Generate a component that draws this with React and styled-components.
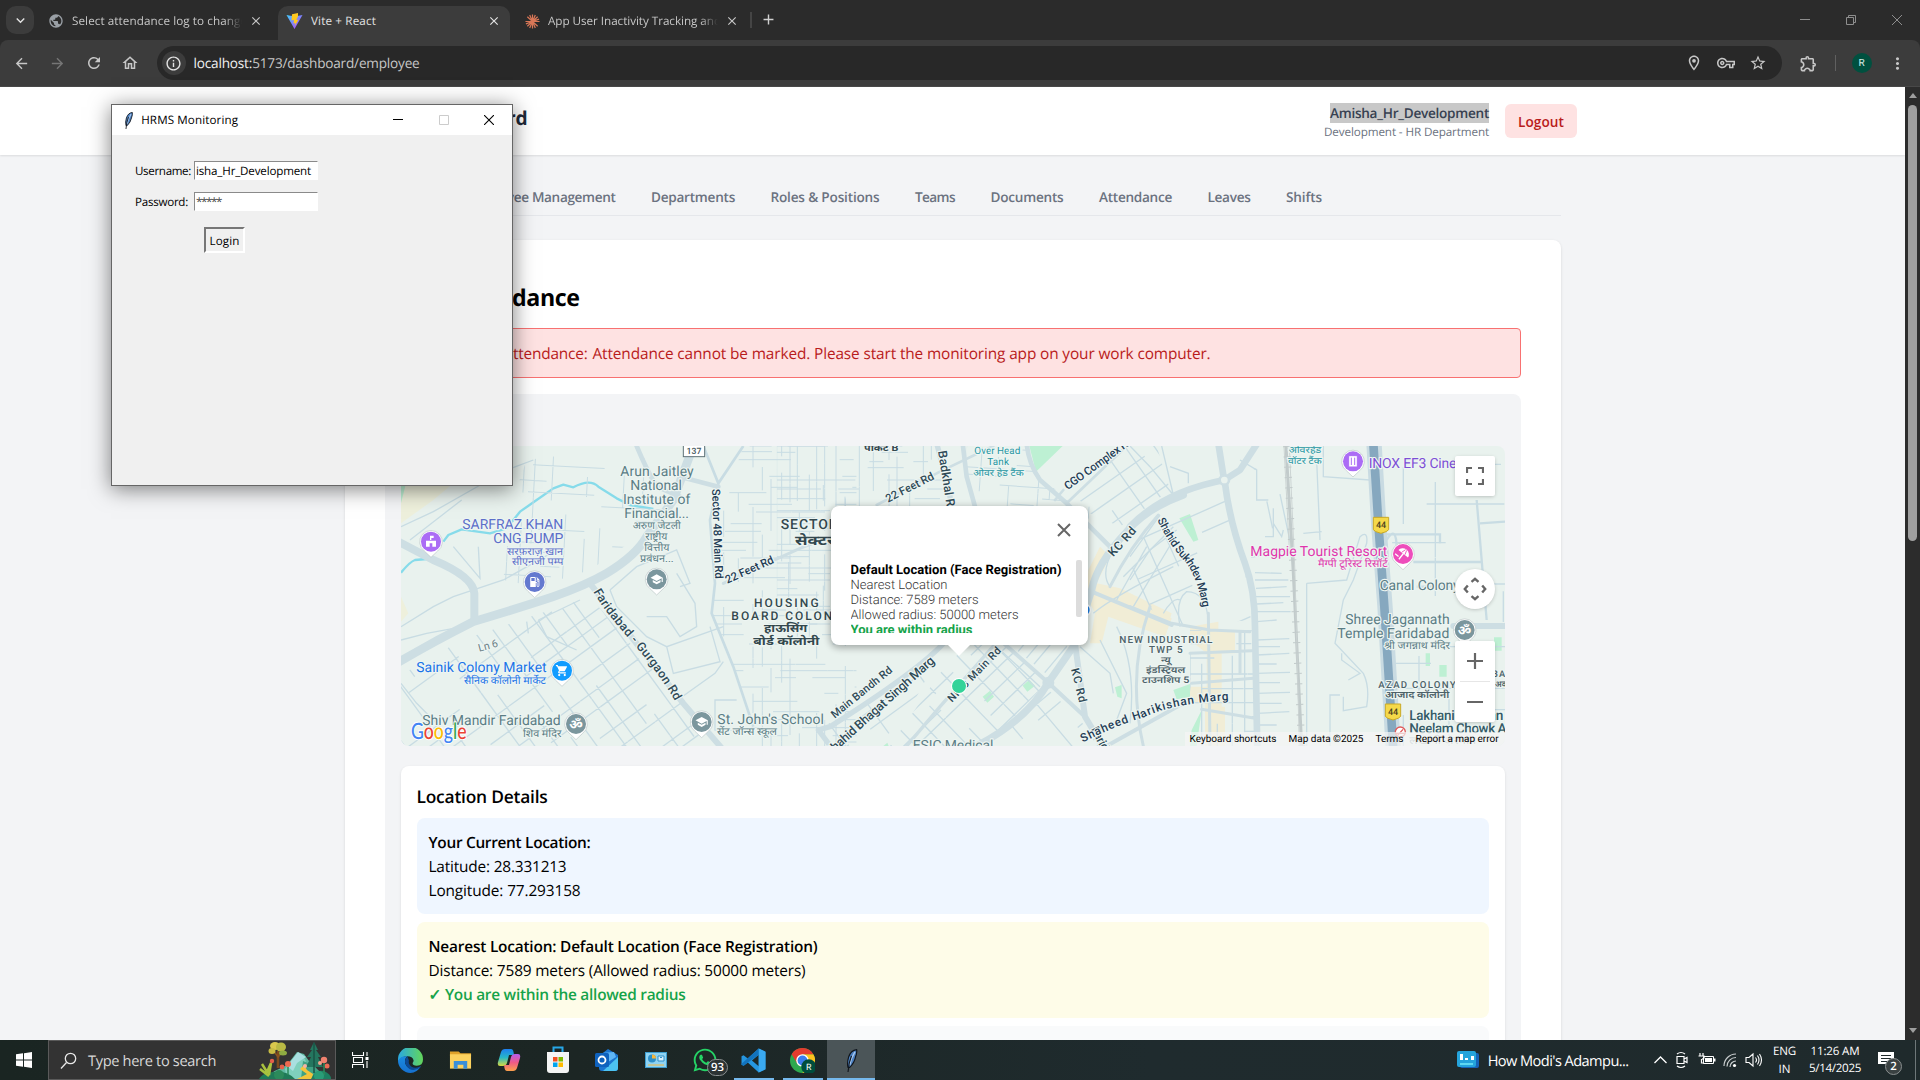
import React, { useLayoutEffect, useRef } from "react";
import styled, { createGlobalStyle, css } from "styled-components";
import {
  MdArrowBack, MdArrowForward, MdRefresh, MdOutlineHome, MdOutlineInfo, MdOutlineLocationOn,
  MdOutlineVpnKey, MdStarBorder, MdOutlineExtension, MdMoreVert, MdAdd, MdClose, MdExpandMore,
  MdPublic, MdLocalGasStation, MdSchool, MdShoppingCart,
} from "react-icons/md";
import { FaWhatsapp } from "react-icons/fa";

const UI = `"Open Sans", "Noto Sans", sans-serif`;

const Global = createGlobalStyle`
  * { box-sizing: border-box; }
  body { margin: 0; background: #f3f4f6; font-family: ${UI}; overflow: hidden; text-rendering: geometricPrecision; }
  p, h1, h2, h3 { margin: 0; }
  svg { display: block; flex: none; }
`;

/* ---------- text that is spaced to fill a given measure ---------- */
const FitSpan = styled.span`
  display: inline-block;
  white-space: pre;
  width: ${(p) => p.$w}px;
  padding-top: ${(p) => p.$drop}px;
`;
function Fit({ w, drop = 0, children }) {
  const ref = useRef(null);
  useLayoutEffect(() => {
    const range = document.createRange();
    range.selectNodeContents(ref.current);
    ref.current.style.letterSpacing = "0px";
    const natural = range.getBoundingClientRect().width;
    const n = ref.current.textContent.length;
    ref.current.style.letterSpacing = `${(w - natural) / n}px`;
  }, [w]);
  return <FitSpan ref={ref} $w={w} $drop={drop}>{children}</FitSpan>;
}

/* ---------- desktop ---------- */
const Desktop = styled.div`
  position: relative;
  width: 1920px;
  height: 1080px;
  display: flex;
  flex-direction: column;
  overflow: hidden;
`;

/* ---------- browser chrome ---------- */
const TabStrip = styled.div`
  height: 40px;
  flex: none;
  display: flex;
  align-items: flex-end;
  background: #2b2b2b;
  color: #c7c7c7;
`;
const TabSearch = styled.div`
  width: 28px;
  height: 28px;
  margin: 0 6px 6px 6px;
  border-radius: 10px;
  background: #3c3c3c;
  display: grid;
  place-items: center;
  color: #e3e3e3;
`;
const Tab = styled.div`
  width: ${(p) => p.$w}px;
  height: 34px;
  padding: 0 ${(p) => p.$pr || 9}px 4px ${(p) => p.$pl || 8}px;
  display: flex;
  align-items: center;
  font-size: 11.7px;
  border-radius: 10px 10px 0 0;
  color: ${(p) => (p.$active ? "#e3e3e3" : "#c7c7c7")};
  background: ${(p) => (p.$active ? "#3c3c3c" : "transparent")};
`;
const TabTitle = styled.div`
  flex: 1;
  margin-left: 8px;
  overflow: hidden;
  white-space: nowrap;
  ${(p) => p.$fade && css`mask-image: linear-gradient(90deg, #000 86%, transparent 96%);`}
`;
const TabDivider = styled.div`
  width: 2px;
  height: 16px;
  margin: 0 8px 12px 4px;
  background: #454545;
`;
const NewTab = styled.div`margin-bottom: 12px; color: #d0d0d0;`;
const WindowButtons = styled.div`
  margin-left: auto;
  width: 138px;
  height: 40px;
  display: grid;
  grid-template-columns: repeat(3, 46px);
  place-items: center;
`;
const Toolbar = styled.div`
  height: 47px;
  flex: none;
  display: flex;
  align-items: center;
  padding-left: 3px;
  background: #3c3c3c;
  border-bottom: 1px solid #484848;
  border-radius: 8px 8px 0 0;
  color: #c7c7c7;
`;
const ToolbarWrap = styled.div`background: #2b2b2b; flex: none;`;
const NavButton = styled.div`
  width: 36.4px;
  display: grid;
  place-items: center;
  color: ${(p) => (p.$dim ? "#767676" : "#c7c7c7")};
`;
const Omnibox = styled.div`
  margin-left: 8px;
  width: 1625px;
  height: 34px;
  padding: 0 15px 0 5px;
  border-radius: 17px;
  background: #282828;
  display: flex;
  align-items: center;
  font-size: 13.6px;
`;
const InfoDot = styled.div`
  width: 24px;
  height: 24px;
  border-radius: 50%;
  background: #3c3c3c;
  display: grid;
  place-items: center;
  margin-right: 8px;
  color: #e3e3e3;
`;
const Address = styled.div`margin-bottom: 1px;`;
const Host = styled.span`color: #f1f1f1;`;
const OmniIcons = styled.div`
  margin-left: auto;
  display: flex;
  align-items: center;
  gap: 14px;
`;
const ToolRight = styled.div`
  flex: 1;
  padding-left: 17px;
  display: flex;
  align-items: center;
`;
const VRule = styled.div`width: 1px; height: 16px; margin: 0 16px 0 17px; background: #606060;`;
const Avatar = styled.div`
  width: 20px;
  height: 20px;
  margin-right: 16px;
  border-radius: 50%;
  background: #00503f;
  color: #d9efe8;
  display: grid;
  place-items: center;
  font: 10px Roboto, sans-serif;
`;

/* ---------- page ---------- */
const Viewport = styled.div`
  height: 953px;
  flex: none;
  display: flex;
  overflow: hidden;
`;
const Page = styled.main`
  width: 1905px;
  height: 953px;
  overflow: hidden;
  background: #f3f4f6;
`;
const ScrollTrack = styled.div`
  width: 15px;
  background: #2c2c2c;
  display: flex;
  flex-direction: column;
  align-items: center;
`;
const ScrollThumb = styled.div`
  width: 9px;
  height: 436px;
  margin-bottom: auto;
  border-radius: 5px;
  background: #9f9f9f;
`;
const ScrollArrow = styled.div`
  width: 0;
  height: 0;
  border: 4.5px solid transparent;
  ${(p) => (p.$down
    ? css`border-top: 5px solid #9f9f9f; border-bottom: 0; margin-bottom: 7px;`
    : css`border-bottom: 5px solid #9f9f9f; border-top: 0; margin: 6px 0 7px;`)}
`;
const AppHeader = styled.header`
  height: 68px;
  padding: 0 328px 0 328.5px;
  display: flex;
  justify-content: space-between;
  background: #fff;
  box-shadow: 0 1px 2px rgba(0, 0, 0, 0.1);
`;
const AppTitle = styled.h1`
  font-size: 19.2px;
  line-height: 28px;
  padding-top: 17px;
  font-weight: 700;
  color: #1f2937;
`;
const Account = styled.div`display: flex; align-items: flex-start; gap: 16px; padding-top: 16px;`;
const AccountText = styled.div`text-align: right;`;
const UserName = styled.div`
  font-size: 13.6px;
  font-weight: 600;
  line-height: 20px;
  height: 20px;
  width: 159px;
  margin-left: auto;
  color: #374151;
  background: #c8c8c8;
`;
const UserRole = styled.div`font-size: 11.7px; line-height: 16px; padding-top: 1px; color: #6b7280;`;
const Logout = styled.button`
  width: 72px;
  height: 34px;
  margin-top: 1px;
  padding: 0;
  border: 0;
  border-radius: 6px;
  background: #fee2e2;
  color: #b91c1c;
  font: 600 13.6px ${UI};
`;
const Body = styled.div`padding: 24px 344.5px 0;`;
const Nav = styled.nav`
  height: 37px;
  padding: 7px 0 0 123px;
  display: flex;
  gap: 35.5px;
  align-items: flex-start;
  border-bottom: 1px solid #e5e7eb;
  font-size: 13.6px;
  font-weight: 600;
  line-height: 20px;
  color: #6b7280;
`;
const Card = styled.section`
  margin-top: 24px;
  height: 860px;
  padding: 40px;
  background: #fff;
  border-radius: 8px;
  box-shadow: 0 1px 3px rgba(0, 0, 0, 0.12);
`;
const CardTitle = styled.h2`
  height: 32px;
  font-size: 23.2px;
  line-height: 32px;
  font-weight: 700;
  color: #000;
`;
const Alert = styled.div`
  height: 50px;
  margin-top: 16px;
  padding: 0 16px;
  display: flex;
  align-items: center;
  gap: 5px;
  border: 1px solid #f87171;
  border-radius: 4px;
  background: #fee2e2;
  color: #b91c1c;
  font-size: 15.4px;
`;
const Panel = styled.div`
  margin-top: 16px;
  height: 700px;
  padding: 16px;
  border-radius: 8px;
  background: #f3f4f6;
`;
const PanelTitle = styled.h3`
  height: 28px;
  font-size: 17px;
  line-height: 28px;
  font-weight: 600;
  margin-bottom: 8px;
`;
const Details = styled.div`
  margin-top: 20px;
  height: 400px;
  padding: 16px;
  border-radius: 8px;
  background: #fff;
  box-shadow: 0 1px 3px rgba(0, 0, 0, 0.1);
`;
const DetailsTitle = styled.h3`
  height: 28px;
  font-size: 17.4px;
  line-height: 28px;
  font-weight: 600;
  margin-bottom: 8px;
`;
const InfoBox = styled.div`
  height: 96px;
  margin-bottom: 8px;
  padding: 12px;
  border-radius: 8px;
  background: ${(p) => p.$bg};
  font-size: 15.4px;
  line-height: 24px;
`;
const Strong = styled.p`font-weight: 600; height: 24px; color: ${(p) => p.$color || "#000"};`;
const Line = styled.p`height: 24px;`;

/* ---------- map ---------- */
const MapBox = styled.div`
  position: relative;
  width: 1104px;
  height: 300px;
  border-radius: 8px;
  overflow: hidden;
  background: #e9f2ee;
  font-family: Roboto, sans-serif;
`;
const Bubble = styled.div`
  position: absolute;
  left: 430px;
  top: 60px;
  width: 257px;
  height: 139px;
  border-radius: 8px;
  background: #fff;
  box-shadow: 0 2px 7px 1px rgba(0, 0, 0, 0.3);
`;
const BubbleTip = styled.svg`position: absolute; left: 116px; top: 138px;`;
const BubbleClose = styled.svg`position: absolute; right: 17px; top: 17px;`;
const BubbleText = styled.div`
  position: absolute;
  left: 20px;
  top: 57px;
  width: 215px;
  height: 70px;
  overflow: hidden;
  font-size: 13px;
  line-height: 15px;
  font-weight: 300;
  color: #333;
`;
const BubbleLine = styled.p`
  height: 15px;
  font-weight: ${(p) => (p.$bold ? 700 : 300)};
  color: ${(p) => p.$color || "#333"};
`;
const BubbleScroll = styled.div`
  position: absolute;
  right: 6px;
  top: 54px;
  width: 6px;
  height: 57px;
  border-radius: 2px;
  background: #dcdcdc;
`;
const MapControl = styled.div`
  position: absolute;
  right: 10px;
  top: ${(p) => p.$top}px;
  width: 40px;
  height: ${(p) => p.$h || 40}px;
  border-radius: ${(p) => (p.$round ? "50%" : "2px")};
  background: #fff;
  box-shadow: 0 1px 4px -1px rgba(0, 0, 0, 0.3);
  display: grid;
  place-items: center;
  ${(p) => p.$split && css`grid-template-rows: 40px 1px 40px;`}
`;
const ControlRule = styled.div`width: 30px; height: 1px; background: #e6e6e6;`;
const Attribution = styled.div`
  position: absolute;
  right: 0;
  bottom: 0;
  width: 320px;
  height: 14px;
  padding-left: 5px;
  display: flex;
  align-items: center;
  gap: 12px;
  background: rgba(245, 245, 245, 0.7);
  font-size: 10px;
  color: #000;
`;

function rng(seed) {
  let s = seed;
  return () => {
    s = (s * 16807) % 2147483647;
    return s / 2147483647;
  };
}
function streets(seed, w, h, u, v, keep = 0.65) {
  const r = rng(seed);
  let d = "";
  for (let y = 0; y < h; y += u * (0.6 + r() * 0.8)) {
    for (let x = 0; x < w;) {
      const len = v * (1 + r() * 3);
      if (r() < keep) d += `M${x | 0} ${y | 0}h${len | 0}`;
      x += len;
    }
  }
  for (let x = 0; x < w; x += v * (0.6 + r() * 0.8)) {
    for (let y = 0; y < h;) {
      const len = u * (1 + r() * 3);
      if (r() < keep) d += `M${x | 0} ${y | 0}v${len | 0}`;
      y += len;
    }
  }
  return d;
}
const MINOR = { fill: "none", stroke: "#c8dce3", strokeWidth: 4 };
const MAJOR = { fill: "none", stroke: "#cddee3", strokeLinecap: "round", strokeLinejoin: "round" };

function Streets({ id, clip, at, angle = 0, seed, w, h, u, v, keep, sw = 4 }) {
  return (
    <>
      <clipPath id={id}><polygon points={clip} /></clipPath>
      <g clipPath={`url(#${id})`}>
        <path transform={`translate(${at}) rotate(${angle})`} d={streets(seed, w, h, u, v, keep)} {...MINOR} strokeWidth={sw} />
      </g>
    </>
  );
}

const MapText = styled.text`
  font-family: Roboto, "Noto Sans Devanagari", "Noto Sans", sans-serif;
  font-size: ${(p) => p.$s}px;
  font-weight: ${(p) => p.$wt || 400};
  fill: ${(p) => p.$c || "#5b7d85"};
  paint-order: stroke;
  stroke: ${(p) => (p.$bare ? "none" : "#edf5f2")};
  stroke-width: 7px;
  stroke-linejoin: round;
`;
function L({ x, y, w, s = 42, c, wt, a = "start", rot, children }) {
  /* Devanagari clusters keep their joins only when the glyphs are scaled, not spaced */
  const indic = /[\u0900-\u097f]/.test(children);
  return (
    <MapText
      x={x} y={y} $s={s} $c={c} $wt={wt} textAnchor={a} textLength={w}
      lengthAdjust={indic ? "spacingAndGlyphs" : "spacing"}
      transform={rot ? `rotate(${rot} ${x} ${y})` : undefined}
    >
      {children}
    </MapText>
  );
}
function Along({ id, d, w, s = 34, c = "#2f4a57", children }) {
  return (
    <>
      <path id={id} d={d} fill="none" />
      <MapText $s={s} $c={c} $wt={500}><textPath href={`#${id}`} textLength={w}>{children}</textPath></MapText>
    </>
  );
}
function Pin({ x, y, c, icon: Icon, children }) {
  return (
    <g transform={`translate(${x} ${y})`}>
      <path d="M0 47L-20 28A34 34 0 1 1 20 28Z" fill="#fff" stroke="#b9c6c6" strokeWidth="2" />
      <circle r="30" fill={c} />
      {Icon && <Icon x={-20} y={-20} size={40} color="#fff" />}
      {children}
    </g>
  );
}
const Om = () => <MapText x={0} y={15} $s={40} $c="#fff" $wt={700} $bare textAnchor="middle">ॐ</MapText>;
function Shield({ x, y }) {
  return (
    <g transform={`translate(${x} ${y})`}>
      <path d="M-23 -23H23V14Q20 20 0 25Q-20 20 -23 14Z" fill="#f5d949" stroke="#c9a927" strokeWidth="3" />
      <text y="9" textAnchor="middle" fontSize="27" fontWeight="500" fill="#4a4220">44</text>
    </g>
  );
}

const WEST = "translate(-11 -6) scale(.33333)";
const MID = "translate(379 -6) scale(.33333)";
const EAST = "translate(729 -6) scale(.33333)";

function MapDrawing() {
  return (
    <svg width="1104" height="300" viewBox="0 0 1104 300">
      {/* ground */}
      <g transform={WEST}>
        <path d="M33 250L130 180L190 130H33Z" fill="#eef0dc" />
        <path d="M33 470L55 520L33 545Z" fill="#eef0dc" />
        <path d="M33 130H48L33 190Z" fill="#bdf0d3" />
        <path d="M33 398Q60 365 75 360L110 357M160 305L175 285L215 268L300 280L350 265L390 215L440 180L490 145L520 134L550 142Q600 115 625 140L680 175L720 195L790 207" fill="none" stroke="#86dbea" strokeWidth="7" strokeLinejoin="round" />
      </g>
      <g transform={MID}>
        <path d="M748 18H848L768 95Z" fill="#bdf0d3" />
        <path d="M608 770L630 752L642 770L622 788ZM728 737L748 719L765 737L742 755ZM1005 742L1025 735V775L1012 770ZM310 918L322 908L326 918Z" fill="#bdf0d3" />
        <path d="M960 320L990 350L950 430L1020 445L1175 520L1155 590L985 530L965 610H930L945 520L920 470L925 390Z" fill="#f1edd6" />
      </g>
      <g transform={EAST}>
        <path d="M0 478L125 535L105 590L0 545ZM180 560L265 545V575H315V640H275V800H285V918H225V790H180V740H230V640L180 600Z" fill="#f1edd6" />
        <path d="M148 235L180 222L205 300L190 305ZM130 750L180 732V770L140 778ZM185 870L215 810L200 918H180ZM887 640H900V678H887ZM928 675H950V710H928ZM1092 592H1115V632H1092Z" fill="#bdf0d3" />
      </g>

      {/* street grids */}
      <g transform={WEST}>
        <Streets id="c1" clip="33,705 215,600 600,470 985,918 33,918" at="-150 760" angle={-36} seed={17} w={1100} h={900} u={58} v={52} keep={0.7} />
        <Streets id="c2" clip="985,240 1060,18 1400,18 1400,918 1100,918 1030,680 965,520" at="960 18" seed={23} w={440} h={900} u={26} v={38} keep={0.5} sw={3} />
        <Streets id="c3" clip="410,60 740,18 840,180 760,280 600,390 440,440 340,420 360,200" at="330 18" angle={3} seed={41} w={520} h={420} u={40} v={52} keep={0.38} sw={3} />
        <path {...MINOR} d="M33 560L130 500L190 470L340 420L500 330M33 600L110 580L220 560M215 180L150 230L60 300M33 260L130 215L350 90L430 60M190 320L270 415L265 320M410 545L415 580M445 540L570 480M445 540L470 590L560 630M660 450L740 380L860 330L900 430L870 440M660 450L680 500L770 590L830 620L1000 560M830 620L850 700L990 665L960 560M870 775L975 700L1000 665M770 530H830L870 590L920 560L915 490L860 400M1040 780H975V870H1050M33 730L80 790L150 860" />
        <path {...MINOR} d="M985 130L960 240L975 430L965 520L1030 680L1090 860M940 18L985 130L1060 18" strokeWidth="8" />
      </g>
      <g transform={MID}>
        <Streets id="c4" clip="-10,18 480,18 510,200 150,200 150,600 -10,600" at="-10 18" seed={57} w={540} h={600} u={30} v={36} keep={0.5} sw={3} />
        <Streets id="c5" clip="330,918 480,700 560,615 680,615 800,728 620,918" at="220 800" angle={-44} seed={71} w={700} h={500} u={42} v={50} keep={0.8} />
        <Streets id="c6" clip="180,918 130,860 300,760 480,640 330,918" at="60 860" angle={-36} seed={12} w={560} h={300} u={62} v={60} keep={0.5} />
        <Streets id="c7" clip="560,18 740,18 760,90 930,240 930,200 560,200" at="560 18" angle={4} seed={87} w={400} h={230} u={22} v={40} keep={0.35} sw={3} />
        <Streets id="c8" clip="860,130 1040,18 1130,18 1170,150 1020,260 930,220" at="820 170" angle={-35} seed={19} w={420} h={260} u={44} v={90} keep={0.5} />
        <Streets id="c9" clip="690,615 870,615 810,710" at="660 640" angle={-50} seed={99} w={300} h={300} u={34} v={50} keep={0.6} />
        <Streets id="c10" clip="690,860 800,745 900,840 960,918 640,918" at="560 850" angle={-40} seed={5} w={500} h={400} u={60} v={74} keep={0.7} />
        <path {...MINOR} d="M650 620L780 740M1000 330Q960 400 990 440M940 520Q1000 470 1180 380M1010 480L1100 320M1060 500L1180 300M1030 410L1180 260M1150 520Q1180 470 1200 480M960 600L1040 760L1010 840L940 900M1010 560Q1070 680 1050 850M900 620L990 700L1000 760" />
      </g>
      <g transform={EAST}>
        <Streets id="c11" clip="90,230 280,140 340,370 370,540 240,550 150,560 0,470 0,330" at="-20 320" angle={-24} seed={33} w={500} h={480} u={62} v={66} keep={0.5} />
        <Streets id="c12" clip="180,570 375,570 380,918 215,918 180,740" at="180 570" seed={61} w={200} h={350} u={44} v={34} keep={0.62} />
        <Streets id="c13" clip="310,130 480,18 480,360 345,360" at="310 100" angle={-12} seed={77} w={260} h={260} u={60} v={70} keep={0.25} />
        <Streets id="c14" clip="780,18 1125,18 1125,918 800,918" at="780 18" seed={29} w={345} h={900} u={62} v={60} keep={0.22} />
        <path {...MINOR} d="M375 398L455 400M375 420H475M378 445L470 440M378 470H480M380 492L460 488M380 515H482M380 545L440 540M380 600L478 596M380 620H450M380 645L478 640M380 672H440M382 700L480 697M382 728H450M382 760L480 757M382 790H455M382 820L478 815M382 855H440M150 560Q135 480 170 455Q230 455 235 545M560 60L570 300M580 18V110L720 120M520 280L575 275M530 430V918M530 430L650 420L690 290Q715 270 710 310L670 420L640 480L615 610L700 700Q720 740 710 800L640 812V770M635 640V660L690 700L655 720M600 918V765H630M120 80L175 100V130M330 60L380 90V180H415M405 290H430V205M430 250L455 290L460 270M0 350L90 225M0 420L60 330L140 270M0 18L60 80L130 165M95 18L130 165" />
        <path {...MINOR} d="M850 366H1055M1040 180L1070 540M760 283H930V310M860 440H1050M1050 250L1125 245M770 300Q800 250 800 330" strokeWidth="7" />
        <path {...MAJOR} d="M970 558H1125" strokeWidth="18" />
        <path d="M468 18L490 400L515 918" fill="none" stroke="#c2cbcb" strokeWidth="9" />
        <path d="M478 18L495 400L508 918M462 18L478 330" fill="none" stroke="#ccd4d3" strokeWidth="3" />
        <path d="M470 18L490 400L515 918" fill="none" stroke="#c2cbcb" strokeWidth="22" strokeDasharray="3 28" />
      </g>

      {/* main roads */}
      <g transform={WEST} {...MAJOR}>
        <path d="M20 670Q130 605 250 545Q400 500 490 470Q590 435 650 400Q740 345 770 290L850 180L910 18" strokeWidth="26" />
        <path d="M20 302L130 360Q250 410 253 460V540" strokeWidth="24" />
        <path d="M600 430L700 560L880 790L1000 930" strokeWidth="18" />
        <path d="M740 18Q770 90 800 140L870 170M870 110L985 140" strokeWidth="14" />
        <path d="M1000 430L1230 325M1230 325L1400 260" strokeWidth="9" />
      </g>
      <g transform={MID} {...MAJOR}>
        <path d="M470 10L500 120L520 220" strokeWidth="16" />
        <path d="M548 10L560 110L585 200M740 10Q745 70 780 120L860 190L995 325" strokeWidth="14" />
        <path d="M290 195L480 95L640 18M860 190L1040 18M825 180L850 150" strokeWidth="8" />
        <path d="M1210 165Q1100 205 1040 275Q950 370 935 450L880 620L805 728Q740 840 590 918" strokeWidth="22" />
        <path d="M885 610L900 720L915 830L975 930" strokeWidth="18" />
        <path d="M660 600L805 728L915 830" strokeWidth="12" />
        <path d="M500 600Q420 690 150 860L115 870L160 930" strokeWidth="16" />
        <path d="M640 618L480 800L380 918" strokeWidth="10" />
        <path d="M935 455L1175 555M980 918L1210 790" strokeWidth="12" />
        <circle cx="805" cy="728" r="14" strokeWidth="8" />
      </g>
      <g transform={EAST} {...MAJOR}>
        <path d="M0 260Q100 155 283 120L330 90L382 10M265 10L280 105M285 130Q300 250 345 370Q375 450 375 560L382 930" strokeWidth="20" />
        <circle cx="283" cy="120" r="14" fill="#e9f2ee" strokeWidth="8" />
        <path d="M0 500L125 550L240 570L360 575M85 225Q0 320 -60 440M235 520L240 918M330 575V700M180 640L365 632M185 730L370 715M40 918Q-10 700 60 500M215 808L375 835" strokeWidth="9" />
        <path d="M732 10L746 250L765 500L790 930" stroke="#c9dbe2" strokeWidth="46" />
        <path d="M730 10L745 250L763 500L790 930" stroke="#86a8bf" strokeWidth="26" />
      </g>

      {/* labels, west */}
      <g transform={WEST}>
        <rect x="880" y="14" width="64" height="36" fill="#fff" stroke="#5f7278" strokeWidth="3" />
        <text x="912" y="43" textAnchor="middle" fontSize="26" fontWeight="500" fill="#44565c">137</text>
        <L x={691} y={109} w={220}>Arun Jaitley</L>
        <L x={721} y={151} w={155}>National</L>
        <L x={699} y={193} w={202}>Institute of</L>
        <L x={703} y={235} w={194}>Financial...</L>
        <L x={728} y={268} w={144} s={31}>अरुण जेटली</L>
        <L x={766} y={301} w={66} s={31}>राष्ट्रीय</L>
        <L x={763} y={333} w={75} s={31}>वित्तीय</L>
        <L x={750} y={366} w={101} s={31}>प्रबंधन...</L>
        <L x={217} y={267} w={303} c="#5c6fc9">SARFRAZ KHAN</L>
        <L x={310} y={310} w={210} c="#5c6fc9">CNG PUMP</L>
        <L x={351} y={344} w={168} s={31} c="#5c6fc9">सरफ़राज़ खान</L>
        <L x={366} y={376} w={154} s={31} c="#5c6fc9">सीएनजी पम्प</L>
        <L x={79} y={696} w={391} c="#1a73e8">Sainik Colony Market</L>
        <L x={222} y={731} w={246} s={31} c="#1a73e8">सैनिक कॉलोनी मार्केट</L>
        <L x={97} y={855} w={415}>Shiv Mandir Faridabad</L>
        <L x={399} y={890} w={115} s={31}>शिव मंदिर</L>
        <L x={982} y={852} w={320}>St. John's School</L>
        <L x={981} y={885} w={180} s={31}>सेंट जॉन्स स्कूल</L>
        <L x={268} y={635} w={60} s={32} c="#6b7f86" rot={-15}>Ln 6</L>
        <L x={966} y={147} w={270} s={34} c="#1f3c55" wt={500} rot={88}>Sector 48 Main Rd</L>
        <L x={1012} y={431} w={155} s={34} c="#1f3c55" wt={500} rot={-24}>22 Feet Rd</L>
        <Along id="fg" d="M610 455Q640 510 720 600Q800 690 850 775L900 850" w={410} s={37}>Faridabad - Gurgaon Rd</Along>
        <L x={1172} y={267} w={238} s={42} c="#33484e" wt={500}>SECTOR 21</L>
        <L x={1215} y={314} w={190} s={40} c="#33484e" wt={700}>सेक्टर 21</L>
        <L x={1092} y={500} w={194} s={36} c="#33484e" wt={500}>HOUSING</L>
        <L x={1024} y={539} w={330} s={36} c="#33484e" wt={500}>BOARD COLONY</L>
        <L x={1122} y={577} w={130} s={34} c="#33484e" wt={700}>हाऊसिंग</L>
        <L x={1090} y={614} w={198} s={34} c="#33484e" wt={700}>बोर्ड कॉलोनी</L>
        <Pin x={123} y={305} c="#ab6cf5"><path d="M-15 15V-3H15V15H4V5H-4V15ZM-3 -5V-18H8V-11H1V-5Z" fill="#fff" /></Pin>
        <Pin x={434} y={426} c="#6479cf" icon={MdLocalGasStation} />
        <Pin x={800} y={418} c="#7b969d" icon={MdSchool} />
        <Pin x={516} y={692} c="#119cff" icon={MdShoppingCart} />
        <Pin x={558} y={852} c="#7b969d"><Om /></Pin>
        <Pin x={935} y={846} c="#7b969d" icon={MdSchool} />
      </g>

      {/* labels, middle */}
      <g transform={MID}>
        <L x={252} y={32} w={103} s={28} c="#33484e" wt={700}>पॉकेट B</L>
        <L x={324} y={188} w={158} s={34} c="#2f4a57" wt={500} rot={-27}>22 Feet Rd</L>
        <L x={474} y={34} w={190} s={37} c="#2f4a57" wt={500} rot={81}>Badkhal Rd</L>
        <L x={583} y={43} w={138} s={30} c="#2595a2">Over Head</L>
        <L x={622} y={76} w={65} s={30} c="#2595a2">Tank</L>
        <L x={580} y={108} w={151} s={28} c="#2595a2">ओवर हेड टैंक</L>
        <L x={863} y={151} w={245} s={34} c="#1f3c55" wt={500} rot={-36}>CGO Complex Rd</L>
        <L x={1000} y={352} w={105} s={36} c="#2f4a57" wt={500} rot={-48}>KC Rd</L>
        <L x={164} y={836} w={225} s={33} c="#2f4a57" wt={500} rot={-39}>Main Bandh Rd</L>
        <L x={150} y={950} w={425} s={38} c="#2f4a57" wt={500} rot={-42}>Shahid Bhagat Singh Marg</L>
        <L x={516} y={788} w={215} s={32} c="#2f4a57" wt={500} rot={-46}>NH 3 Main Rd</L>
        <L x={873} y={688} w={104} s={34} c="#2f4a57" wt={500} rot={76}>KC Rd</L>
        <L x={932} y={868} w={200} s={36} c="#2f4a57" wt={500} rot={62}>Faridabad Rd</L>
        <L x={398} y={930} w={242}>ESIC Medical</L>
        <circle cx="912" cy="510" r="21" fill="#fff" />
        <circle cx="912" cy="510" r="17" fill="#1a80ea" />
        <circle cx="537" cy="738" r="24" fill="#fff" />
        <circle cx="537" cy="738" r="21" fill="#34d399" />
      </g>

      {/* labels, east */}
      <g transform={EAST}>
        <L x={476} y={40} w={98} s={28} c="#2595a2">ओवरहेड</L>
        <L x={474} y={72} w={101} s={28} c="#2595a2">वॉटर टैंक</L>
        <L x={716} y={84} w={322} c="#7d4fd6">INOX EF3 Cinema</L>
        <L x={361} y={348} w={411} c="#e035ac">Magpie Tourist Resort</L>
        <L x={564} y={380} w={209} s={31} c="#e035ac">मैग्पी टूरिस्ट रिसॉर्ट</L>
        <L x={749} y={450} w={240}>Canal Colony</L>
        <L x={646} y={552} w={313}>Shree Jagannath</L>
        <L x={622} y={594} w={336}>Temple Faridabad</L>
        <L x={763} y={628} w={197} s={31}>श्री जगन्नाथ मंदिर</L>
        <L x={-32} y={610} w={279} s={30} c="#4c6168" wt={500}>NEW INDUSTRIAL</L>
        <L x={57} y={640} w={101} s={30} c="#4c6168" wt={500}>TWP 5</L>
        <L x={93} y={670} w={29} s={27} c="#4c6168" wt={600}>न्यू</L>
        <L x={48} y={700} w={118} s={27} c="#4c6168" wt={600}>इंडस्ट्रियल</L>
        <L x={36} y={729} w={142} s={27} c="#4c6168" wt={600}>टाउनशिप 5</L>
        <L x={745} y={745} w={232} s={29} c="#4c6168" wt={500}>AZAD COLONY</L>
        <L x={765} y={775} w={193} s={29} c="#4c6168" wt={600}>आजाद कॉलोनी</L>
        <L x={1086} y={712} w={80} s={28} c="#4c6168" wt={500}>BATA</L>
        <L x={1095} y={741} w={40} s={26} c="#4c6168" wt={600}>अक</L>
        <L x={838} y={839} w={282} s={41} c="#345a66" wt={500}>Lakhani Armaan</L>
        <L x={838} y={878} w={292} s={41} c="#345a66" wt={500}>Neelam Chowk A</L>
        <L x={838} y={912} w={200} s={31} c="#8fa4aa">लखानी अरमान</L>
        <Along id="ss" d="M82 240Q120 320 170 370Q210 430 222 530" w={300} s={34} c="#1f3c55">Shahid Sukhdev Marg</Along>
        <Along id="sh" d="M-142 908Q-40 855 40 833Q130 788 310 780" w={460} s={35} c="#1f3c55">Shaheed Harikishan Marg</Along>
        <Shield x={753} y={255} />
        <Shield x={789} y={815} />
        <circle cx="811" cy="876" r="15" fill="#fff" stroke="#e05a5a" strokeWidth="4" />
        <path d="M798 880H824M803 886L819 868" stroke="#e05a5a" strokeWidth="4" />
        <Pin x={669} y={64} c="#ab6cf5"><path d="M-13 -17H13V17H-13ZM-5 -11V11M5 -11V11" fill="#fff" stroke="#ab6cf5" strokeWidth="3" /></Pin>
        <Pin x={819} y={342} c="#ee4dbb">
          <g transform="rotate(38)">
            <path d="M-18 -1A18 16 0 0 1 18 -1Z" fill="#fff" />
            <path d="M0 -2V20M-19 14H-6" stroke="#fff" strokeWidth="4" fill="none" />
            <path d="M-6 -2L-2 -15M6 -2L2 -15" stroke="#ee4dbb" strokeWidth="2.5" />
          </g>
        </Pin>
        <Pin x={1004} y={570} c="#7b969d"><Om /></Pin>
      </g>

      <text x="10" y="293" fontSize="22.500" fontFamily="Lato, sans-serif" fontWeight="500" textLength="55.500" lengthAdjust="spacingAndGlyphs" stroke="#fff" strokeWidth="2" paintOrder="stroke"><tspan fill="#4285f4">G</tspan><tspan fill="#ea4335">o</tspan><tspan fill="#fbbc04">o</tspan><tspan fill="#4285f4">g</tspan><tspan fill="#34a853">l</tspan><tspan fill="#ea4335">e</tspan></text>
    </svg>
  );
}

function LocationMap() {
  return (
    <MapBox>
      <MapDrawing />
      <Bubble>
        <BubbleTip width="24" height="13"><path d="M0 0H24L12 12Z" fill="#fff" /></BubbleTip>
        <BubbleClose width="14" height="14"><path d="M1 1L13 13M13 1L1 13" stroke="#666" strokeWidth="2" /></BubbleClose>
        <BubbleText>
          <BubbleLine $bold $color="#000"><Fit w={211}>Default Location (Face Registration)</Fit></BubbleLine>
          <BubbleLine><Fit w={97}>Nearest Location</Fit></BubbleLine>
          <BubbleLine><Fit w={128}>Distance: 7589 meters</Fit></BubbleLine>
          <BubbleLine><Fit w={168}>Allowed radius: 50000 meters</Fit></BubbleLine>
          <BubbleLine $bold $color="#16a34a"><Fit w={122}>You are within radius</Fit></BubbleLine>
        </BubbleText>
        <BubbleScroll />
      </Bubble>
      <MapControl $top={10}>
        <svg width="18" height="18"><path d="M1 6V1H6M12 1H17V6M17 12V17H12M6 17H1V12" fill="none" stroke="#666" strokeWidth="2.2" /></svg>
      </MapControl>
      <MapControl $top={123} $round>
        <svg width="24" height="24"><path d="M8.500 4.800L12 1.800L15.500 4.800M8.500 19.200L12 22.200L15.500 19.200M4.800 8.500L1.800 12L4.800 15.500M19.200 8.500L22.200 12L19.200 15.500" fill="none" stroke="#666" strokeWidth="2.4" /></svg>
      </MapControl>
      <MapControl $top={195} $h={81} $split>
        <svg width="16" height="16"><path d="M8 0V16M0 8H16" stroke="#666" strokeWidth="2.2" /></svg>
        <ControlRule />
        <svg width="16" height="16"><path d="M0 8H16" stroke="#666" strokeWidth="2.2" /></svg>
      </MapControl>
      <Attribution>
        <Fit w={87}>Keyboard shortcuts</Fit>
        <Fit w={75}>Map data ©2025</Fit>
        <Fit w={28}>Terms</Fit>
        <Fit w={83}>Report a map error</Fit>
      </Attribution>
    </MapBox>
  );
}

/* ---------- HRMS desktop window ---------- */
const Win = styled.div`
  position: absolute;
  left: 111px;
  top: 104px;
  width: 402px;
  height: 382px;
  border: 1px solid #666;
  background: #f0f0f0;
  box-shadow: 0 3px 20px rgba(0, 0, 0, 0.5);
  font-size: 11.6px;
  color: #000;
`;
const WinBar = styled.div`
  height: 30px;
  padding-left: 11px;
  display: flex;
  align-items: center;
  gap: 8px;
  background: #fff;
`;
const WinButtons = styled.div`
  margin-left: auto;
  display: grid;
  grid-template-columns: repeat(3, 45.5px);
  place-items: center;
`;
const Form = styled.div`padding: 26px 0 0 23px;`;
const Field = styled.div`
  height: 19px;
  margin-bottom: 12px;
  display: grid;
  grid-template-columns: 59px 124px;
  align-items: center;
`;
const Entry = styled.div`
  height: 19px;
  padding-left: 1px;
  line-height: 17px;
  background: #fff;
  border: 1px solid #fff;
  border-top-color: #8a8a8a;
  border-left-color: #8a8a8a;
  color: ${(p) => p.$color || "#000"};
`;
const LoginButton = styled.div`
  width: 41px;
  height: 26px;
  margin: 16px 0 0 69px;
  border: 2px solid #fff;
  border-top-color: #777;
  border-left-color: #777;
  display: grid;
  place-items: center;
`;
function Feather({ h = 18 }) {
  return (
    <svg width={h * 0.6} height={h} viewBox="0 0 12 20">
      <path d="M11 .5Q6 1 4 7Q2.500 12 3.500 16L5 16Q9 12 10 7Q11.500 3 11 .5Z" fill="#4a7fc0" stroke="#10151c" strokeWidth="1" />
      <path d="M9.500 2.500Q6 8 5 14" stroke="#a9c8ee" strokeWidth="1.200" fill="none" />
      <path d="M6.500 6Q4 12 3.500 20" stroke="#10151c" strokeWidth="1" fill="none" />
    </svg>
  );
}
function HrmsWindow() {
  return (
    <Win>
      <WinBar>
        <Feather h={17} />
        <Fit w={97}>HRMS Monitoring</Fit>
        <WinButtons>
          <svg width="10" height="10"><path d="M0 4.500H10" stroke="#000" /></svg>
          <svg width="10" height="10"><path d="M.5 .5H9.500V9.500H.5Z" stroke="#ccc" fill="none" /></svg>
          <svg width="10" height="10"><path d="M0 0L10 10M10 0L0 10" stroke="#000" strokeWidth="1.100" /></svg>
        </WinButtons>
      </WinBar>
      <Form>
        <Field><Fit w={56} drop={1}>Username:</Fit><Entry><Fit w={115} drop={1}>isha_Hr_Development</Fit></Entry></Field>
        <Field><Fit w={53} drop={1}>Password:</Fit><Entry $color="#444"><Fit w={25} drop={1}>*****</Fit></Entry></Field>
        <LoginButton><Fit w={30} drop={2}>Login</Fit></LoginButton>
      </Form>
    </Win>
  );
}

/* ---------- taskbar ---------- */
const Taskbar = styled.div`
  height: 40px;
  display: flex;
  background: linear-gradient(90deg, #1a2522, #1c2624 30%, #1f2b2e 60%, #1f2a2c);
  color: #fff;
`;
const StartButton = styled.div`width: 48px; display: grid; place-items: center;`;
const SearchBox = styled.div`
  width: 288px;
  padding-left: 11px;
  display: flex;
  align-items: center;
  background: #333;
  border: 1px solid #5a5a5a;
  font-size: 14.6px;
  color: #d8d8d8;
  gap: 11px;
`;
const SearchArt = styled.svg`margin-left: auto;`;
const TaskItem = styled.div`
  width: ${(p) => p.$w || 49}px;
  height: 40px;
  position: relative;
  display: grid;
  place-items: center;
  background: ${(p) => (p.$on ? "#4b5558" : "transparent")};
  ${(p) => p.$open && css`
    &::after {
      content: "";
      position: absolute;
      left: ${p.$on ? 0 : 4.5}px;
      right: ${p.$on ? 0 : 4.5}px;
      bottom: 0;
      height: 2px;
      background: #76b9ed;
    }
  `}
`;
const CountBadge = styled.div`
  position: absolute;
  left: ${(p) => p.$x}px;
  top: ${(p) => p.$y}px;
  height: 17px;
  min-width: 17px;
  padding: 0 3px;
  border: 1px solid #8a8f90;
  border-radius: 9px;
  background: ${(p) => p.$bg || "#2c3334"};
  color: #fff;
  font-size: 11.4px;
  font-weight: 600;
  line-height: 15px;
  text-align: center;
`;
const Tray = styled.div`
  margin-left: auto;
  height: 40px;
  display: flex;
  align-items: center;
`;
const NewsText = styled.div`font-size: 14.6px; margin: 0 25px 0 9px;`;
const TrayIcons = styled.div`display: flex; align-items: center; gap: 6.6px;`;
const TrayStack = styled.div`
  width: ${(p) => p.$w}px;
  display: flex;
  flex-direction: column;
  align-items: center;
  font-size: 11.6px;
  line-height: 17.5px;
`;
const Notices = styled.div`position: relative; width: 51px; height: 40px; padding: 12px 0 0 14px;`;
const PeekEdge = styled.div`width: 1px; height: 40px; margin-right: 4px; background: #6e7779;`;

const VSCode = () => (
  <svg width="25" height="25" viewBox="0 0 24 24">
    <path d="M17 .5L23.500 3.500V20.500L17 23.500L6.500 14L2.500 17L.5 16V8L2.500 7L6.500 10ZM17 6.500L10.500 12L17 17.500Z" fill="#2596e0" fillRule="evenodd" />
    <path d="M17 .5L23.500 3.500V20.500L17 23.500Z" fill="#3aa9f0" />
    <path d="M17 6.500L2.500 17L.5 16V15L17 .5Z" fill="#1273bd" />
  </svg>
);
const Chrome = () => (
  <svg width="25" height="25" viewBox="0 0 24 24">
    <circle cx="12" cy="12" r="12" fill="#2da94f" />
    <path d="M12 6H22.400A12 12 0 0 1 12 24L17 14Z" fill="#fcc31e" />
    <path d="M1.600 6A12 12 0 0 1 22.400 6H12L7 15Z" fill="#e33b2e" />
    <circle cx="12" cy="12" r="6" fill="#fff" />
    <circle cx="12" cy="12" r="4.700" fill="#3b7ded" />
    <circle cx="18" cy="18" r="7.200" fill="#004d3d" />
    <text x="18" y="21" fontSize="8.500" textAnchor="middle" fill="#fff" fontFamily="Roboto, sans-serif">R</text>
  </svg>
);
const Edge = () => (
  <svg width="25" height="25" viewBox="0 0 24 24">
    <defs>
      <linearGradient id="e1" x1="0" x2="1"><stop offset="0" stopColor="#2aa9e0" /><stop offset="1" stopColor="#63d65a" /></linearGradient>
      <linearGradient id="e2" x1="0" y1="0" x2="0" y2="1"><stop offset="0" stopColor="#1a8be0" /><stop offset="1" stopColor="#1670cf" /></linearGradient>
    </defs>
    <path d="M0 11A12 12 0 0 1 24 11Q24 17 18 17Q14 17 14 14.500Q15 13 15 12Q14 8 9 8Q3 8 0 13Z" fill="url(#e1)" />
    <path d="M0 12Q3 7 9 8Q6 10 7 15Q9 20 15 20Q19 20 22 17.500Q18 24 12 24A12 12 0 0 1 0 12Z" fill="url(#e2)" />
    <path d="M9 8Q5 12 8 17Q12 23 19 20Q22 18.500 22 17.500Q17 20 13 18Q9.500 15 10.500 12Z" fill="#0d4a94" />
  </svg>
);
const Explorer = () => (
  <svg width="23" height="20" viewBox="0 0 24 20">
    <path d="M1 1H10L12 3H23V6H1Z" fill="#e0a32b" /><rect x="1" y="4" width="22" height="15" fill="#fcd25f" />
    <path d="M5 19V11H19V19H15V15H9V19Z" fill="#3a8fd9" />
  </svg>
);
const Copilot = () => (
  <svg width="24" height="24" viewBox="0 0 24 24">
    <defs>
      <linearGradient id="k1" x1="0" y1="0" x2="0" y2="1"><stop offset="0" stopColor="#1d7ff0" /><stop offset=".5" stopColor="#27b7c7" /><stop offset="1" stopColor="#d8d93d" /></linearGradient>
      <linearGradient id="k2" x1="0" y1="0" x2="0" y2="1"><stop offset="0" stopColor="#b65cf0" /><stop offset=".5" stopColor="#ef5a86" /><stop offset="1" stopColor="#fba14b" /></linearGradient>
    </defs>
    <path d="M8 1H14Q16 1 16.500 4L17 7H12L10 15Q9 18 6 18H3Q0 18 1 14L4 4Q5 1 8 1Z" fill="url(#k1)" />
    <path d="M16 23H10Q8 23 7.500 20L7 17H12L14 9Q15 6 18 6H21Q24 6 23 10L20 20Q19 23 16 23Z" fill="url(#k2)" />
  </svg>
);
const Store = () => (
  <svg width="24" height="28" viewBox="0 0 24 28">
    <path d="M7.500 8V1.500H16.500V8" fill="none" stroke="#27a7e8" strokeWidth="2" />
    <path d="M1 6H23V24Q23 27 20 27H4Q1 27 1 24Z" fill="#f4f4f4" />
    <path d="M7 11h4.500v4.500H7z" fill="#f25022" /><path d="M12.500 11H17v4.500h-4.500z" fill="#7fba00" />
    <path d="M7 16.500h4.500V21H7z" fill="#00a4ef" /><path d="M12.500 16.500H17V21h-4.500z" fill="#ffb900" />
  </svg>
);
const Outlook = () => (
  <svg width="25" height="24" viewBox="0 0 25 24">
    <path d="M5 8L14 1L24 7V20Q24 23 21 23H8Q5 23 5 20Z" fill="#1b74cf" />
    <path d="M8 5L20 4L22 9L14 14Z" fill="#5fb6f5" /><path d="M24 9V20Q24 23 21 23H9Z" fill="#4cc3f2" />
    <rect x="1" y="5" width="14" height="14" rx="1.500" fill="#0f62be" />
    <circle cx="8" cy="12" r="3.500" fill="none" stroke="#fff" strokeWidth="1.800" />
  </svg>
);
const ControlPanel = () => (
  <svg width="22" height="16" viewBox="0 0 22 16">
    <rect x=".5" y=".5" width="21" height="15" fill="#8fd3f2" stroke="#3d9ed0" />
    <circle cx="7" cy="6.500" r="4" fill="#2d8fc9" /><path d="M7 6.500V2.500A4 4 0 0 1 11 6.500Z" fill="#f6b73c" />
    <path d="M13 4H19V9H13ZM15 5.500H17" fill="#d9f0fb" stroke="#2d8fc9" /><path d="M3 13H19" stroke="#f6b73c" />
  </svg>
);
const Forest = () => (
  <SearchArt width="78" height="38" viewBox="0 0 78 38">
    <path d="M8 38Q14 31 22 28L30 24L40 11L47 13L52 20L64 32L72 38Z" fill="#5fb8a0" />
    <path d="M28 28L41 12L48 18L54 38H30Z" fill="#7fd0bd" />
    <path d="M30 25L41 11L49 16L40 22L36 30Z" fill="#a9dfe0" />
    <path d="M46 20L56 24L64 33L58 38H44Z" fill="#3fa183" />
    <path d="M40 38L50 33L43 28L47 24L50 29L56 33L55 38Z" fill="#f4c43c" />
    <path d="M2 38Q5 32 16 31Q30 29 38 38Z" fill="#1f7a58" />
    <path d="M54 38Q58 28 67 30Q74 33 74 38Z" fill="#1d8061" />
    <path d="M21 10V27" stroke="#7c4a1e" strokeWidth="2.600" />
    <path d="M16 9L21 16L27 9" fill="none" stroke="#8a531f" strokeWidth="1.500" />
    <ellipse cx="18" cy="5" rx="5" ry="4" fill="#d9c84d" /><ellipse cx="24" cy="6" rx="5" ry="4.500" fill="#b9b944" />
    <ellipse cx="15" cy="10" rx="3.500" ry="3" fill="#c8bd45" /><ellipse cx="26" cy="12" rx="4" ry="2.500" fill="#8fab42" />
    <path d="M57 1L61 9H59L64 16H61L66 26H49L54 16H50L55 9H53Z" fill="#24765f" />
    <path d="M57 2V32" stroke="#185446" strokeWidth="1.500" />
    <path d="M5 23L10 31L14 22L12 34M3 28L12 35" stroke="#a9c23e" strokeWidth="2.500" fill="none" />
    <circle cx="15" cy="20" r="2.200" fill="#e5604a" /><circle cx="31" cy="23" r="3" fill="#ee6a50" />
    <circle cx="25" cy="26" r="2.400" fill="#e5604a" /><circle cx="67" cy="19" r="3.200" fill="#f0826f" />
    <circle cx="48" cy="25" r="2" fill="#f3b3a6" /><circle cx="63" cy="22" r="2" fill="#f3a18c" />
    <circle cx="70" cy="25" r="2.500" fill="#ec6c55" />
    <path d="M67 22V34M31 26V34" stroke="#2c8a5b" strokeWidth="1.500" />
    <circle cx="22" cy="34" r="5" fill="#2c8a5b" /><circle cx="62" cy="35" r="5" fill="#2a9d77" />
  </SearchArt>
);

function WindowsTaskbar() {
  return (
    <Taskbar>
      <StartButton>
        <svg width="16" height="16"><path d="M0 2.300L7 1.300V7.500H0ZM8 1.200L16 0V7.500H8ZM0 8.500H7V14.700L0 13.700ZM8 8.500H16V16L8 14.800Z" fill="#fff" /></svg>
      </StartButton>
      <SearchBox>
        <svg width="17" height="17"><path d="M6.500 10.500L1 16.500" stroke="#e8e8e8" strokeWidth="1.300" /><circle cx="10.500" cy="6.500" r="5.200" fill="none" stroke="#e8e8e8" strokeWidth="1.300" /></svg>
        <Fit w={128} drop={1}>Type here to search</Fit>
        <Forest />
      </SearchBox>
      <TaskItem>
        <svg width="17" height="16"><path d="M.5 0V3.500H11.500V0M.5 16V12.500H11.500V16M1.500 5.500H10.500V10.500H1.500ZM15 0V4M15 9V16" fill="none" stroke="#fff" strokeWidth="1.100" /><rect x="13.500" y="5" width="3" height="3" fill="#fff" /></svg>
      </TaskItem>
      <TaskItem $w={51}><Edge /></TaskItem>
      <TaskItem $w={48}><Explorer /></TaskItem>
      <TaskItem $w={50}><Copilot /></TaskItem>
      <TaskItem $w={48}><Store /></TaskItem>
      <TaskItem><Outlook /></TaskItem>
      <TaskItem><ControlPanel /></TaskItem>
      <TaskItem><FaWhatsapp size={26} color="#25d366" /><CountBadge $x={27} $y={19}>93</CountBadge></TaskItem>
      <TaskItem $open><VSCode /></TaskItem>
      <TaskItem $open><Chrome /></TaskItem>
      <TaskItem $w={48} $open $on><Feather h={23} /></TaskItem>
      <Tray>
        <svg width="22" height="18"><rect x="3" y="2" width="19" height="15" rx="2" fill="#1763b8" /><rect width="19" height="16" rx="2" fill="#25a4dc" /><path d="M4.500 3V9M9.500 7V9M15.500 5V9" stroke="#fff" strokeWidth="3" /><path d="M3 13H16" stroke="#5fd8f2" strokeWidth="2" /></svg>
        <NewsText><Fit w={141} drop={1}>How Modi's Adampu...</Fit></NewsText>
        <TrayIcons>
          <svg width="13" height="16"><path d="M.5 11L6.500 5L12.500 11" fill="none" stroke="#fff" strokeWidth="1.300" /></svg>
          <svg width="18" height="18"><path d="M4 5.500H11V12.500H4ZM11 8L14 6.500V11.500L11 10M4 3Q8 0 12 3M4 15Q8 18 12 15" fill="none" stroke="#fff" strokeWidth="1.200" /></svg>
          <svg width="18" height="16"><path d="M5.500 4.500H15.500V11.500H5.500Z" fill="none" stroke="#fff" /><rect x="7" y="6" width="7" height="4" fill="#fff" /><rect x="16" y="6.500" width="1.500" height="3" fill="#fff" /><path d="M2 1V4M5 1V4M.5 4H6V6Q3.500 8 3.500 7V11H6" fill="none" stroke="#fff" strokeWidth="1.200" /></svg>
          <svg width="16" height="16"><path d="M2 14A12 12 0 0 1 14 2M5 14.500A9 9 0 0 1 14 5.500M8 15A6 6 0 0 1 14 9" fill="none" stroke="#c8cdce" strokeWidth="1.200" /><circle cx="12.500" cy="13.500" r="1.600" fill="#fff" /></svg>
          <svg width="18" height="16"><path d="M1 5.500H4L8 2V14L4 10.500H1ZM10.500 5.500Q12.500 8 10.500 10.500M12.500 3.500Q15.500 8 12.500 12.500M14.500 2Q18.500 8 14.500 14" fill="none" stroke="#fff" strokeWidth="1.100" /></svg>
        </TrayIcons>
        <TrayStack $w={43}><Fit w={23} drop={1}>ENG</Fit><Fit w={12}>IN</Fit></TrayStack>
        <TrayStack $w={58}><Fit w={49}>11:26 AM</Fit><Fit w={52}>5/14/2025</Fit></TrayStack>
        <Notices>
          <svg width="17" height="17"><path d="M0 0H16V12H11V15.500L7.500 12H0Z" fill="#fff" /><path d="M3 3.500H13M3 6.500H13M3 9.500H9" stroke="#1f2a2c" /></svg>
          <CountBadge $x={21} $y={18} $bg="#3a4142">2</CountBadge>
        </Notices>
        <PeekEdge />
      </Tray>
    </Taskbar>
  );
}

const ViteLogo = () => (
  <svg width="17" height="16" viewBox="0 0 17 16">
    <defs><linearGradient id="v1" x1="0" y1="0" x2="1" y2="1"><stop offset="0" stopColor="#41d1ff" /><stop offset="1" stopColor="#bd34fe" /></linearGradient></defs>
    <path d="M.5 2L8.500 16L16.500 2L8.500 3.500Z" fill="url(#v1)" />
    <path d="M12 0L6 1.200L5.500 7.500L8 7L7.500 10.500L9.500 10L8.500 13.500L12.500 6.500L10.300 7L12 3.500Z" fill="#ffc91f" />
  </svg>
);
const ClaudeLogo = () => (
  <svg width="15" height="15" viewBox="-8 -8 16 16">
    <path d="M0 -7.500V7.500M-7.500 0H7.500M-5.500 -5L5.500 5M5.500 -5L-5.500 5M-3 -7L3 7M3 -7L-3 7M-7 2.500L7 -2.500" stroke="#d97757" strokeWidth="1.300" />
  </svg>
);

const NAV = [
  ["Employee Management", 148], ["Departments", 84], ["Roles & Positions", 109], ["Teams", 40],
  ["Documents", 73], ["Attendance", 73], ["Leaves", 43], ["Shifts", 36],
];

export default function App() {
  return (
    <Desktop>
      <Global />
      <TabStrip>
        <TabSearch><MdExpandMore size={17} /></TabSearch>
        <Tab $w={238} $pr={15}><MdPublic size={16} color="#9aa0a6" /><TabTitle $fade><Fit w={175}>Select attendance log to change</Fit></TabTitle><MdClose size={14} /></Tab>
        <Tab $w={232} $active><ViteLogo /><TabTitle><Fit w={65}>Vite + React</Fit></TabTitle><MdClose size={14} /></Tab>
        <Tab $w={236} $pl={15} $pr={7}><ClaudeLogo /><TabTitle $fade><Fit w={173}>App User Inactivity Tracking and</Fit></TabTitle><MdClose size={14} /></Tab>
        <TabDivider />
        <NewTab><MdAdd size={17} /></NewTab>
        <WindowButtons>
          <svg width="10" height="10"><path d="M0 4.500H10" stroke="#8e8e8e" /></svg>
          <svg width="10" height="10"><path d="M.5 2.500H7.500V9.500H.5ZM2.500 2.500V.5H9.500V7.500H7.500" fill="none" stroke="#8e8e8e" /></svg>
          <svg width="10" height="10"><path d="M0 0L10 10M10 0L0 10" stroke="#8e8e8e" /></svg>
        </WindowButtons>
      </TabStrip>
      <ToolbarWrap>
        <Toolbar>
          <NavButton><MdArrowBack size={17} /></NavButton>
          <NavButton $dim><MdArrowForward size={17} /></NavButton>
          <NavButton><MdRefresh size={18} /></NavButton>
          <NavButton><MdOutlineHome size={18} /></NavButton>
          <Omnibox>
            <InfoDot><MdOutlineInfo size={17} /></InfoDot>
            <Address><Fit w={226}><Host>localhost:</Host>5173/dashboard/employee</Fit></Address>
            <OmniIcons><MdOutlineLocationOn size={18} /><MdOutlineVpnKey size={18} /><MdStarBorder size={18} /></OmniIcons>
          </Omnibox>
          <ToolRight>
            <MdOutlineExtension size={19} />
            <VRule />
            <Avatar>R</Avatar>
            <MdMoreVert size={19} />
          </ToolRight>
        </Toolbar>
      </ToolbarWrap>
      <Viewport>
        <Page>
          <AppHeader>
            <AppTitle><Fit w={199}>Employee Dashboard</Fit></AppTitle>
            <Account>
              <AccountText>
                <UserName><Fit w={159}>Amisha_Hr_Development</Fit></UserName>
                <UserRole><Fit w={165}>Development - HR Department</Fit></UserRole>
              </AccountText>
              <Logout><Fit w={46}>Logout</Fit></Logout>
            </Account>
          </AppHeader>
          <Body>
            <Nav>{NAV.map(([t, w]) => <Fit key={t} w={w} drop={1}>{t}</Fit>)}</Nav>
            <Card>
              <CardTitle><Fit w={195} drop={1}>Mark Attendance</Fit></CardTitle>
              <Alert>
                <Fit w={186} drop={1}>Failed to mark attendance:</Fit>
                <Fit w={618} drop={1}>Attendance cannot be marked. Please start the monitoring app on your work computer.</Fit>
              </Alert>
              <Panel>
                <PanelTitle><Fit w={100}>Location Map</Fit></PanelTitle>
                <LocationMap />
                <Details>
                  <DetailsTitle><Fit w={131} drop={1}>Location Details</Fit></DetailsTitle>
                  <InfoBox $bg="#eff6ff">
                    <Strong><Fit w={162} drop={1}>Your Current Location:</Fit></Strong>
                    <Line><Fit w={138} drop={1}>Latitude: 28.331213</Fit></Line>
                    <Line><Fit w={152} drop={1}>Longitude: 77.293158</Fit></Line>
                  </InfoBox>
                  <InfoBox $bg="#fefce8">
                    <Strong><Fit w={389} drop={1}>Nearest Location: Default Location (Face Registration)</Fit></Strong>
                    <Line><Fit w={377} drop={1}>Distance: 7589 meters (Allowed radius: 50000 meters)</Fit></Line>
                    <Strong $color="#16a34a"><Fit w={257} drop={1}>✓ You are within the allowed radius</Fit></Strong>
                  </InfoBox>
                  <InfoBox $bg="#f9fafb" />
                </Details>
              </Panel>
            </Card>
          </Body>
        </Page>
        <ScrollTrack>
          <ScrollArrow />
          <ScrollThumb />
          <ScrollArrow $down />
        </ScrollTrack>
      </Viewport>
      <WindowsTaskbar />
      <HrmsWindow />
    </Desktop>
  );
}
